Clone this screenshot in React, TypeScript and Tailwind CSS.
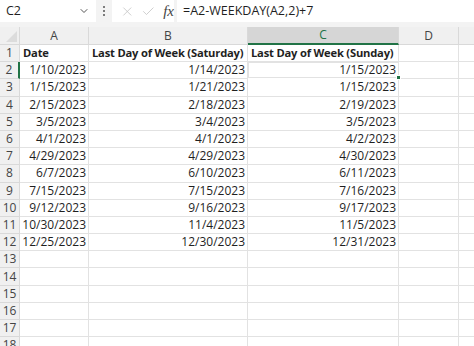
import { ChevronDown, X, Check } from 'lucide-react'

const rows: [string, string, string][] = [
  ['1/10/2023', '1/14/2023', '1/15/2023'],
  ['1/15/2023', '1/21/2023', '1/15/2023'],
  ['2/15/2023', '2/18/2023', '2/19/2023'],
  ['3/5/2023', '3/4/2023', '3/5/2023'],
  ['4/1/2023', '4/1/2023', '4/2/2023'],
  ['4/29/2023', '4/29/2023', '4/30/2023'],
  ['6/7/2023', '6/10/2023', '6/11/2023'],
  ['7/15/2023', '7/15/2023', '7/16/2023'],
  ['9/12/2023', '9/16/2023', '9/17/2023'],
  ['10/30/2023', '11/4/2023', '11/5/2023'],
  ['12/25/2023', '12/30/2023', '12/31/2023'],
]

const cols = 'grid grid-cols-[20px_69px_159px_151px_60px_1fr]'
const cell = 'border-r border-b border-[#e2e2e2] h-[17.2px] px-[2px] flex items-center whitespace-nowrap overflow-visible'
const rowHead = 'border-r border-b border-[#d9d9d9] bg-[#f0f0f0] h-[17.2px] flex items-center justify-center text-[#444]'
const bold = ' font-bold pl-[3px] text-[11.2px] tracking-[-0.2px]'

export default function App() {
  const empty = [13, 14, 15, 16, 17, 18]
  return (
    <div className="w-[474px] h-[346px] overflow-hidden bg-white text-[12px] text-[#1f1f1f]" style={{ fontFamily: '"Open Sans", "Noto Sans", sans-serif' }}>
      {/* formula bar */}
      <div className="h-[27px] bg-[#f3f3f3] flex items-start text-[12.5px]">
        <div className="w-[96px] h-[22px] bg-white flex items-center pl-[6px] pr-[6px] justify-between">
          <span>C2</span>
          <ChevronDown className="w-[12px] h-[12px] text-[#555]" strokeWidth={2} />
        </div>
        <div className="w-[16px] h-[22px] flex flex-col items-center justify-center gap-[2px]">
          <span className="w-[2px] h-[2px] bg-[#555] rounded-full" />
          <span className="w-[2px] h-[2px] bg-[#555] rounded-full" />
          <span className="w-[2px] h-[2px] bg-[#555] rounded-full" />
        </div>
        <div className="w-[62px] h-[22px] bg-white flex items-center pl-[8px] gap-[6px]">
          <X className="w-[15px] h-[15px] text-[#c2c2c2]" strokeWidth={1.3} />
          <Check className="w-[15px] h-[15px] text-[#c2c2c2]" strokeWidth={1.3} />
          <span className="text-[#444] italic text-[15px] ml-[2px]" style={{ fontFamily: '"Liberation Serif", serif' }}>fx</span>
        </div>
        <div className="w-[3px]" />
        <div className="flex-1 h-[22px] bg-white flex items-center pl-[6px]">=A2-WEEKDAY(A2,2)+7</div>
      </div>

      {/* column headers */}
      <div className={cols}>
        <div className="h-[18px] bg-[#f0f0f0] border-r border-b border-[#d9d9d9] relative">
          <svg className="absolute right-[2px] bottom-[2px]" width="11" height="11" viewBox="0 0 11 11">
            <polygon points="11,0 11,11 0,11" fill="#dcdcdc" />
          </svg>
        </div>
        {['A', 'B'].map((c) => (
          <div key={c} className="h-[18px] bg-[#f0f0f0] border-r border-b border-[#d9d9d9] flex items-center justify-center text-[#444]">{c}</div>
        ))}
        <div className="h-[18px] bg-[#d6d6d6] border-r border-[#d9d9d9] border-b-2 border-b-[#217346] flex items-center justify-center text-[#217346]">C</div>
        <div className="h-[18px] bg-[#f0f0f0] border-r border-b border-[#d9d9d9] flex items-center justify-center text-[#444]">D</div>
        <div className="h-[18px] bg-[#f0f0f0] border-b border-[#d9d9d9]" />
      </div>

      {/* header row */}
      <div className={cols}>
        <div className={rowHead}>1</div>
        <div className={cell + bold}>Date</div>
        <div className={cell + bold}>Last Day of Week (Saturday)</div>
        <div className={cell + bold}>Last Day of Week (Sunday)</div>
        <div className={cell} />
        <div className={cell + ' border-r-0'} />
      </div>

      {rows.map((r, i) => (
        <div key={i} className={cols}>
          <div className={rowHead + (i === 0 ? ' bg-[#d6d6d6] border-r-2 border-r-[#217346]' : '')}>{i + 2}</div>
          <div className={cell + ' justify-end'}>{r[0]}</div>
          <div className={cell + ' justify-end'}>{r[1]}</div>
          <div className={cell + ' justify-end' + (i === 0 ? ' relative border-2 border-[#217346] -mt-px -ml-px' : '')}>
            {r[2]}
            {i === 0 && <span className="absolute -right-[3px] -bottom-[3px] w-[5px] h-[5px] bg-[#217346] border border-white" />}
          </div>
          <div className={cell} />
          <div className={cell + ' border-r-0'} />
        </div>
      ))}

      {empty.map((n) => (
        <div key={n} className={cols}>
          <div className={rowHead}>{n}</div>
          <div className={cell} />
          <div className={cell} />
          <div className={cell} />
          <div className={cell} />
          <div className={cell + ' border-r-0'} />
        </div>
      ))}
    </div>
  )
}
